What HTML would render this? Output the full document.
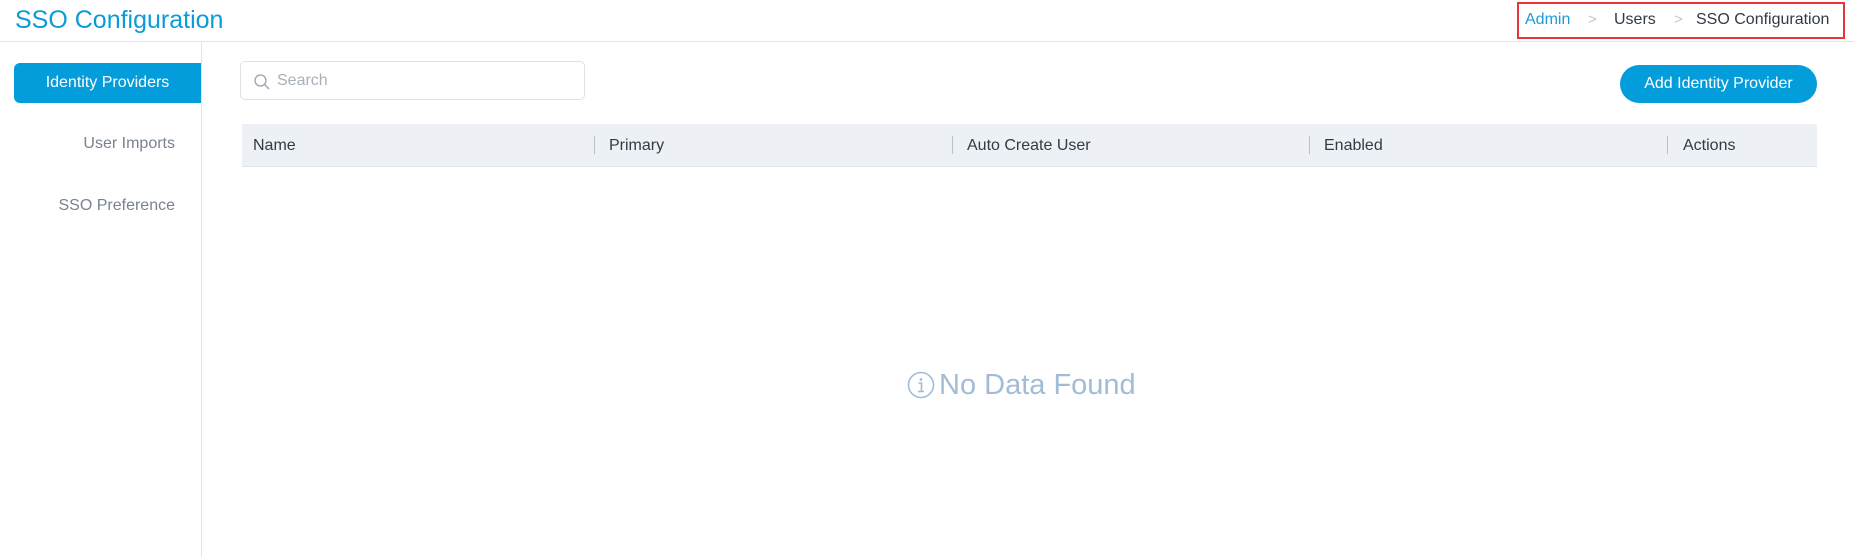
<!DOCTYPE html>
<html><head><meta charset="utf-8"><style>
*{margin:0;padding:0;box-sizing:border-box}
body{width:1854px;height:557px;background:#fff;font-family:"Liberation Sans",sans-serif;position:relative;overflow:hidden}
.a{position:absolute;white-space:nowrap}
</style></head><body>
<div class="a" style="left:15px;top:6px;font-size:25px;color:#0a9bd9;">SSO Configuration</div>
<div class="a" style="left:0;top:41px;width:1854px;height:1px;background:#e1e5ea"></div>
<div class="a" style="left:1517px;top:2px;width:328px;height:37px;border:2px solid #e8343a"></div>
<div class="a" style="left:1525px;top:11px;font-size:16px;color:#1a9ad8">Admin</div>
<div class="a" style="left:1588px;top:11px;font-size:15px;color:#c0c6d0">&gt;</div>
<div class="a" style="left:1614px;top:11px;font-size:16px;color:#333a46">Users</div>
<div class="a" style="left:1674px;top:11px;font-size:15px;color:#c0c6d0">&gt;</div>
<div class="a" style="left:1696px;top:11px;font-size:16px;color:#333a46">SSO Configuration</div>

<div class="a" style="left:201px;top:42px;width:1px;height:515px;background:#e1e5ea"></div>
<div class="a" style="left:14px;top:63px;width:187px;height:40px;background:#049ddc;border-radius:6px 0 0 6px;color:#fff;font-size:16px;line-height:40px;text-align:center">Identity Providers</div>
<div class="a" style="right:1679px;top:135px;font-size:16px;color:#7a8290">User Imports</div>
<div class="a" style="right:1679px;top:197px;font-size:16px;color:#7a8290">SSO Preference</div>

<div class="a" style="left:240px;top:61px;width:345px;height:39px;border:1px solid #dde2e8;border-radius:5px"></div>
<svg class="a" style="left:253px;top:73px" width="18" height="18" viewBox="0 0 18 18"><circle cx="7.5" cy="7.5" r="5.5" fill="none" stroke="#9aa3ae" stroke-width="1.3"/><line x1="11.5" y1="11.5" x2="16" y2="16" stroke="#9aa3ae" stroke-width="1.3"/></svg>
<div class="a" style="left:277px;top:72px;font-size:16px;color:#a7b0bc">Search</div>

<div class="a" style="left:1620px;top:65px;width:197px;height:38px;background:#049ddc;border-radius:19px;color:#fff;font-size:16px;line-height:38px;text-align:center">Add Identity Provider</div>

<div class="a" style="left:242px;top:124px;width:1575px;height:43px;background:#edf0f5;border-bottom:1px solid #dfe3ea"></div>
<div class="a" style="left:594px;top:136px;width:1px;height:18px;background:#b7c0cc"></div>
<div class="a" style="left:952px;top:136px;width:1px;height:18px;background:#b7c0cc"></div>
<div class="a" style="left:1309px;top:136px;width:1px;height:18px;background:#b7c0cc"></div>
<div class="a" style="left:1667px;top:136px;width:1px;height:18px;background:#b7c0cc"></div>
<div class="a" style="left:253px;top:137px;font-size:16px;color:#333a46">Name</div>
<div class="a" style="left:609px;top:137px;font-size:16px;color:#333a46">Primary</div>
<div class="a" style="left:967px;top:137px;font-size:16px;color:#333a46">Auto Create User</div>
<div class="a" style="left:1324px;top:137px;font-size:16px;color:#333a46">Enabled</div>
<div class="a" style="left:1683px;top:137px;font-size:16px;color:#333a46">Actions</div>

<svg class="a" style="left:907px;top:371px" width="28" height="28" viewBox="0 0 28 28"><circle cx="14" cy="14" r="12.5" fill="none" stroke="#a3bcd6" stroke-width="1.6"/><circle cx="14" cy="8.5" r="1.4" fill="#a3bcd6"/><path d="M11.5 12h3v8M11 20.5h6" stroke="#a3bcd6" stroke-width="1.6" fill="none"/></svg>
<div class="a" style="left:939px;top:369px;font-size:29px;color:#a3bcd6">No Data Found</div>
</body></html>
